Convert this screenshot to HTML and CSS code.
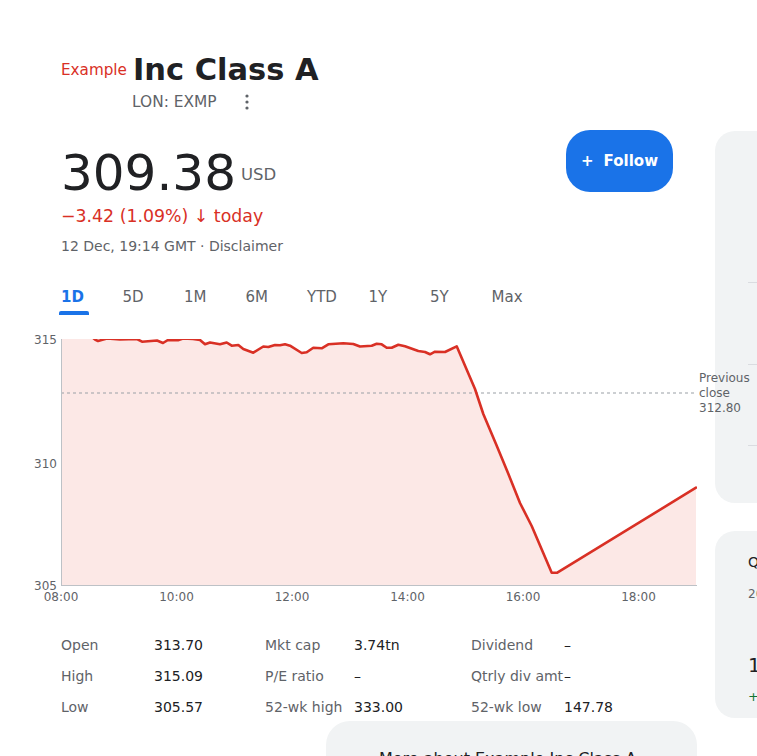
FILE: index.html
```html
<!DOCTYPE html>
<html lang="en">
<head>
<meta charset="utf-8">
<title>Example Inc Class A</title>
<link rel="stylesheet" href="styles.css">
</head>
<body>
<div class="page">
  <main class="main">
    <div class="title-row">
      <span class="issuer">Example</span>
      <h1 class="name">Inc Class A</h1>
    </div>
    <div class="ticker-row">
      <span class="ticker">LON: EXMP</span>
      <svg class="kebab" viewBox="0 0 4 16" width="4" height="16" aria-hidden="true">
        <circle cx="2" cy="2" r="1.6"/>
        <circle cx="2" cy="8" r="1.6"/>
        <circle cx="2" cy="14" r="1.6"/>
      </svg>
    </div>
    <div class="price-row">
      <div class="price-wrap">
        <span class="price">309.38</span><span class="currency">USD</span>
      </div>
      <button class="follow"><span class="plus">+</span><span>Follow</span></button>
    </div>
    <div class="change">−3.42 (1.09%) ↓ today</div>
    <div class="meta">12 Dec, 19:14 GMT · Disclaimer</div>
    <nav class="tabs">
      <div class="tab active"><span>1D</span><i class="bar"></i></div>
      <div class="tab"><span>5D</span></div>
      <div class="tab"><span>1M</span></div>
      <div class="tab"><span>6M</span></div>
      <div class="tab"><span>YTD</span></div>
      <div class="tab"><span>1Y</span></div>
      <div class="tab"><span>5Y</span></div>
      <div class="tab"><span>Max</span></div>
    </nav>
    <div class="chart">
      <svg viewBox="0 320 757 290" width="757" height="290">
        <defs>
          <clipPath id="plot"><rect x="61" y="338" width="636" height="246"/></clipPath>
        </defs>
        <g clip-path="url(#plot)">
          <polygon class="area" points="61,333 80,334 92,336 95,338.5 98,340 107,337.5 120,338.5 137,338 142,340.7 157,339.5 163,342 168,339 178,339.3 183,337.5 193,338 200,339 205,343.3 210,341.5 220,343.3 226.7,341.5 231.7,344.7 238.3,344 243.3,348 253.3,351.7 263.3,345.5 268.3,346 275,344 280,344.3 285,343.3 290,344.7 301.7,352 306.7,351.3 313.3,346.7 321.7,347.3 328.3,343.3 343.3,342.3 353.3,343 360,345.5 371.7,344.7 376.7,342.7 381.7,343.3 386.7,346.7 391.7,346.7 398.3,343.7 405,345.3 418.3,350 425,351 430,353.3 435,350.7 445,351 456.7,345.3 466,367 475,388 483.3,413 496,443 508,472 520,502 531.7,525 551.7,571.7 557.3,571.7 696,486.7 696,584 61,584"/>
          <line class="prev" x1="61" y1="392" x2="697" y2="392"/>
          <polyline class="line" points="61,333 80,334 92,336 95,338.5 98,340 107,337.5 120,338.5 137,338 142,340.7 157,339.5 163,342 168,339 178,339.3 183,337.5 193,338 200,339 205,343.3 210,341.5 220,343.3 226.7,341.5 231.7,344.7 238.3,344 243.3,348 253.3,351.7 263.3,345.5 268.3,346 275,344 280,344.3 285,343.3 290,344.7 301.7,352 306.7,351.3 313.3,346.7 321.7,347.3 328.3,343.3 343.3,342.3 353.3,343 360,345.5 371.7,344.7 376.7,342.7 381.7,343.3 386.7,346.7 391.7,346.7 398.3,343.7 405,345.3 418.3,350 425,351 430,353.3 435,350.7 445,351 456.7,345.3 466,367 475,388 483.3,413 496,443 508,472 520,502 531.7,525 551.7,571.7 557.3,571.7 696,486.7"/>
        </g>
        <line class="axis" x1="61.5" y1="338" x2="61.5" y2="584"/>
        <line class="axis" x1="61" y1="584.5" x2="697" y2="584.5"/>
        <text class="ylab" x="57" y="342.5">315</text>
        <text class="ylab" x="57" y="466.5">310</text>
        <text class="ylab" x="57" y="589">305</text>
        <text class="xlab" x="61" y="599.5">08:00</text>
        <text class="xlab" x="176.5" y="599.5">10:00</text>
        <text class="xlab" x="292" y="599.5">12:00</text>
        <text class="xlab" x="407.5" y="599.5">14:00</text>
        <text class="xlab" x="523" y="599.5">16:00</text>
        <text class="xlab" x="638.5" y="599.5">18:00</text>
        <text class="prevlab" x="699" y="380.7">Previous</text>
        <text class="prevlab" x="699" y="395.7">close</text>
        <text class="prevlab" x="699" y="410.7">312.80</text>
      </svg>
    </div>
    <div class="stats">
      <span class="k">Open</span><span class="v">313.70</span>
      <span class="k">Mkt cap</span><span class="v">3.74tn</span>
      <span class="k">Dividend</span><span class="v">–</span>
      <span class="k">High</span><span class="v">315.09</span>
      <span class="k">P/E ratio</span><span class="v">–</span>
      <span class="k">Qtrly div amt</span><span class="v">–</span>
      <span class="k">Low</span><span class="v">305.57</span>
      <span class="k">52-wk high</span><span class="v">333.00</span>
      <span class="k">52-wk low</span><span class="v">147.78</span>
    </div>
    <div class="more">More about Example Inc Class A</div>
  </main>
  <aside class="side">
    <div class="card card-rows">
      <div class="row r1"></div>
      <div class="row r2"></div>
      <div class="row r3"></div>
      <div class="row r4"></div>
    </div>
    <div class="card card-fin">
      <div class="fin-title">Quarterly financials</div>
      <div class="fin-sub">2024 (USD)</div>
      <div class="fin-value">1.23tn</div>
      <div class="fin-change">+4.52%</div>
    </div>
  </aside>
</div>
</body>
</html>
```

FILE: styles.css
```css
html, body {
  margin: 0;
  padding: 0;
  background: #ffffff;
}

body {
  font-family: "DejaVu Sans", "Noto Sans", sans-serif;
  color: #202124;
  overflow: hidden;
}

.page {
  display: flex;
  gap: 18px;
  padding-left: 61px;
  width: 757px;
  height: 756px;
  box-sizing: border-box;
  overflow: hidden;
}

.main {
  flex: 0 0 636px;
  width: 636px;
  padding-top: 52px;
}

/* Title */
.title-row {
  display: flex;
  align-items: center;
  gap: 6px;
}

.issuer {
  font-size: 15.2px;
  line-height: 18px;
  color: #d93025;
}

.name {
  margin: 0;
  font-size: 30.5px;
  line-height: 36px;
  font-weight: 700;
  color: #202124;
}

.ticker-row {
  display: flex;
  align-items: center;
  height: 20px;
  margin-top: 4px;
  padding-left: 71px;
}

.ticker {
  font-size: 15.4px;
  line-height: 20px;
  color: #5f6368;
}

.kebab {
  display: block;
  margin-left: 28px;
  fill: #5f6368;
}

/* Price */
.price-row {
  display: flex;
  justify-content: space-between;
  align-items: flex-start;
  margin-top: 18px;
  padding-right: 24px;
}

.price-wrap {
  display: flex;
  align-items: center;
  padding-top: 15px;
}

.price {
  font-size: 50px;
  line-height: 56px;
  color: #202124;
}

.currency {
  font-size: 16.5px;
  line-height: 20px;
  color: #5f6368;
  margin-left: 5px;
  margin-top: 3px;
}

.follow {
  display: flex;
  align-items: center;
  justify-content: center;
  gap: 10px;
  width: 107px;
  height: 62px;
  padding: 0;
  border: 0;
  border-radius: 24px;
  background: #1a73e8;
  color: #ffffff;
  font-family: "DejaVu Sans", sans-serif;
  font-size: 15px;
  font-weight: 700;
  line-height: 18px;
}

.change {
  margin-top: 4px;
  font-size: 17.35px;
  line-height: 22px;
  color: #d93025;
}

.meta {
  margin-top: 10px;
  font-size: 14px;
  line-height: 18px;
  color: #5f6368;
}

/* Tabs */
.tabs {
  display: flex;
  align-items: flex-start;
  margin-top: 33px;
}

.tab {
  display: flex;
  flex-direction: column;
  width: 61.5px;
  font-size: 15px;
  line-height: 18px;
  color: #5f6368;
}

.tab.active {
  color: #1a73e8;
  font-weight: 700;
}

.bar {
  display: block;
  width: 30px;
  height: 4px;
  margin-top: 4.5px;
  margin-left: -2px;
  background: #1a73e8;
  border-radius: 2px 2px 0 0;
}

/* Chart */
.chart {
  position: relative;
  z-index: 1;
  margin-top: 6px;
  margin-left: -61px;
  width: 757px;
  height: 290px;
}

.chart svg {
  display: block;
}

.area {
  fill: #fce8e6;
}

.line {
  fill: none;
  stroke: #d93025;
  stroke-width: 2.6;
  stroke-linejoin: round;
  stroke-linecap: round;
}

.prev {
  stroke: #9aa0a6;
  stroke-width: 1.2;
  stroke-dasharray: 3 3;
}

.axis {
  stroke: #bdc1c6;
  stroke-width: 1;
}

.ylab,
.xlab,
.prevlab {
  font-family: "DejaVu Sans", sans-serif;
  font-size: 12px;
  fill: #5f6368;
}

.ylab {
  text-anchor: end;
}

.xlab {
  text-anchor: middle;
}

/* Stats */
.stats {
  display: grid;
  grid-template-columns: 93px 111px 89px 117px 93px 133px;
  row-gap: 11px;
  margin-top: 24.5px;
  font-size: 14px;
  line-height: 20px;
  white-space: nowrap;
}

.stats .k {
  color: #5f6368;
}

.stats .v {
  color: #202124;
}

.more {
  box-sizing: border-box;
  margin-top: 3.5px;
  margin-left: 265px;
  width: 371px;
  height: 90px;
  padding: 28px 0 0 53px;
  border-radius: 24px;
  background: #f1f3f4;
  font-size: 16px;
  line-height: 20px;
  color: #202124;
  white-space: nowrap;
}

/* Side column */
.side {
  flex: 0 0 300px;
  display: flex;
  flex-direction: column;
  gap: 28px;
  padding-top: 131px;
}

.card {
  box-sizing: border-box;
  width: 300px;
  border-radius: 20px;
  background: #f1f3f4;
}

.card-rows {
  padding-left: 33px;
}

.card-rows .row {
  box-sizing: border-box;
}

.card-rows .r1 { height: 151px; }
.card-rows .r2 { height: 82px; border-top: 1px solid #dadce0; }
.card-rows .r3 { height: 81px; border-top: 1px solid #dadce0; }
.card-rows .r4 { height: 58px; border-top: 1px solid #dadce0; }

.card-fin {
  height: 187px;
  padding: 21px 0 0 33px;
  white-space: nowrap;
}

.fin-title {
  font-size: 14px;
  line-height: 20px;
  color: #202124;
}

.fin-sub {
  margin-top: 14px;
  font-size: 12px;
  line-height: 16px;
  color: #5f6368;
}

.fin-value {
  margin-top: 50px;
  font-size: 20px;
  line-height: 26px;
  color: #202124;
}

.fin-change {
  margin-top: 10px;
  font-size: 13px;
  line-height: 18px;
  color: #137333;
}
```
